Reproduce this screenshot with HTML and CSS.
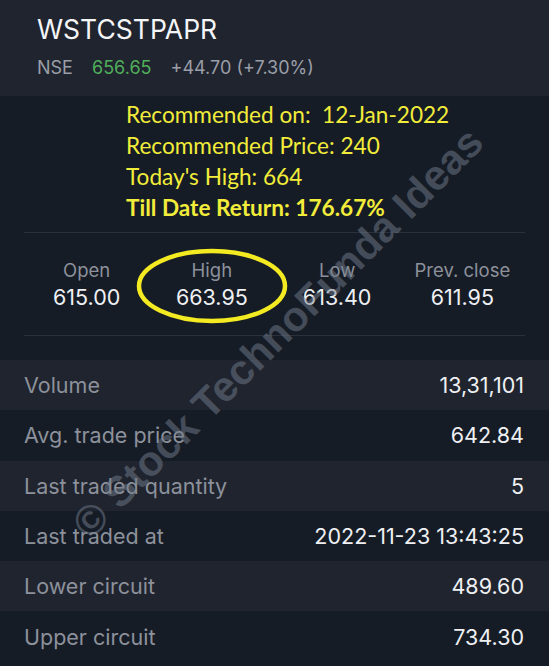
FILE: index.html
```html
<!DOCTYPE html>
<html lang="en">
<head>
  <meta charset="UTF-8" />
  <meta name="viewport" content="width=device-width, initial-scale=1.0"/>
  <title>WSTCSTPAPR</title>
  <link rel="stylesheet" href="styles.css">
</head>
<body>
  <div class="page">

    <!-- Header -->
    <div class="header">
      <h1 class="symbol">WSTCSTPAPR</h1>
      <div class="quote">
        <span class="exchange">NSE</span>
        <span class="ltp">656.65</span>
        <span class="change">+44.70 (+7.30%)</span>
      </div>
    </div>

    <!-- Recommendation note -->
    <div class="panel">
      <div class="note">
        <p>Recommended on:&nbsp; 12-Jan-2022</p>
        <p>Recommended Price: 240</p>
        <p>Today's High: 664</p>
        <p class="bold">Till Date Return: 176.67%</p>
      </div>

      <div class="ohlc">
        <div class="stat">
          <span class="stat-label">Open</span>
          <span class="stat-value">615.00</span>
        </div>
        <div class="stat">
          <span class="stat-label">High</span>
          <span class="stat-value">663.95</span>
          <svg class="ring" width="160" height="80" viewBox="0 0 160 80">
            <ellipse cx="80" cy="40" rx="73" ry="35" fill="none" stroke="#f3ea22" stroke-width="4.5"/>
          </svg>
        </div>
        <div class="stat">
          <span class="stat-label">Low</span>
          <span class="stat-value">613.40</span>
        </div>
        <div class="stat">
          <span class="stat-label">Prev. close</span>
          <span class="stat-value">611.95</span>
        </div>
      </div>
    </div>

    <!-- Detail rows -->
    <ul class="details">
      <li><span>Volume</span><span class="val">13,31,101</span></li>
      <li><span>Avg. trade price</span><span class="val">642.84</span></li>
      <li><span>Last traded quantity</span><span class="val">5</span></li>
      <li><span>Last traded at</span><span class="val">2022-11-23 13:43:25</span></li>
      <li><span>Lower circuit</span><span class="val">489.60</span></li>
      <li><span>Upper circuit</span><span class="val">734.30</span></li>
    </ul>

    <div class="watermark">© Stock TechnoFunda Ideas</div>
  </div>
</body>
</html>
```

FILE: styles.css
```css
body {
  margin: 0;
  padding: 0;
  background: #161c26;
  font-family: Inter, "Liberation Sans", sans-serif;
}
.page {
  position: relative;
  width: 549px;
  height: 666px;
  overflow: hidden;
  background: #161c26;
}
.header {
  background: #20242e;
  height: 96px;
  padding: 0 0 0 37px;
  box-sizing: border-box;
}
.symbol {
  margin: 0;
  padding-top: 12px;
  font-size: 26.5px;
  font-weight: 400;
  line-height: 34px;
  color: #f4f5f7;
}
.quote {
  margin-top: 11px;
  font-size: 18px;
  color: #9a9ea8;
}
.ltp {
  color: #4fae5a;
  margin: 0 14px 0 14px;
}
.panel {
  background: #161c26;
  padding: 3px 24px 0 24px;
}
.note {
  padding-left: 102px;
  color: #f2ec3a;
  font-family: Lato, "Open Sans", sans-serif;
  font-size: 22.6px;
}
.note p {
  margin: 0;
  line-height: 31px;
}
.note .bold {
  font-weight: 700;
}
.ohlc {
  display: grid;
  grid-template-columns: repeat(4, 1fr);
  margin-top: 9px;
  border-top: 1px solid #2a313c;
  border-bottom: 1px solid #2a313c;
  height: 102px;
  align-items: center;
}
.stat {
  position: relative;
  display: flex;
  flex-direction: column;
  align-items: center;
  margin-top: -1px;
}
.stat-label {
  font-size: 18.5px;
  color: #8c919b;
  line-height: 26px;
}
.stat-value {
  font-size: 21.5px;
  color: #eef0f3;
  line-height: 28px;
}
.ring {
  position: absolute;
  left: 50%;
  top: 50%;
  margin: -38px 0 0 -80px;
}
.details {
  list-style: none;
  margin: 24px 0 0;
  padding: 0;
}
.details li {
  display: flex;
  justify-content: space-between;
  align-items: center;
  height: 50.3px;
  padding: 0 25px 0 24px;
  font-size: 21.5px;
  color: #8c919b;
  background: #20242e;
}
.details li:nth-child(even) {
  background: #161c26;
}
.details .val {
  color: #eef0f3;
}
.watermark {
  position: absolute;
  left: 80px;
  top: 507px;
  line-height: 48px;
  transform: rotate(-45deg);
  transform-origin: left center;
  font-family: "Liberation Sans", sans-serif;
  font-weight: 700;
  font-size: 42px;
  white-space: nowrap;
  color: rgba(115, 125, 140, 0.5);
  pointer-events: none;
}
```
